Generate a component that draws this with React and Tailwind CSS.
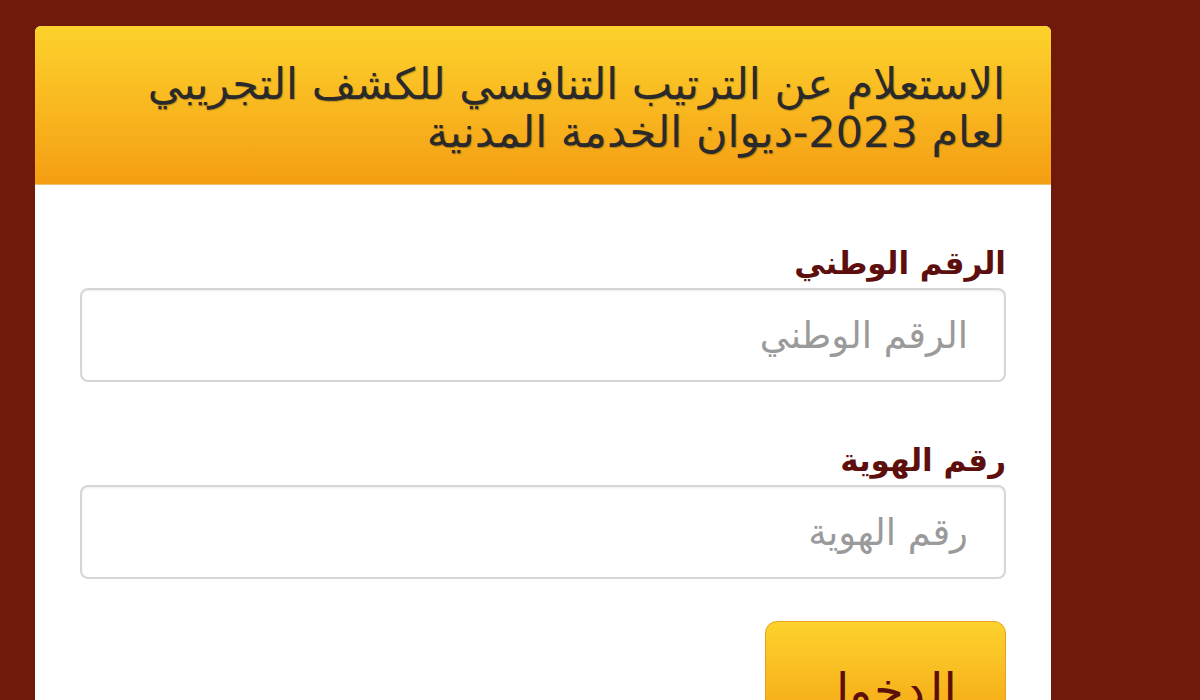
export default function App() {
  return (
    <div
      dir="rtl"
      className="w-[1200px] h-[700px] overflow-hidden bg-[#6f1a0b] pt-[26px]"
      style={{ fontFamily: '"DejaVu Sans", "Liberation Sans", sans-serif' }}
    >
      <div className="mr-[149px] w-[1016px] rounded-t-[6px] bg-white overflow-hidden">
        <div className="h-[159px] bg-gradient-to-b from-[#fcd22c] to-[#f49e12] border-b border-[#f0c070] px-[46px] pt-[34px]">
          <h1 className="text-[43px] leading-[48px] text-[#2a2a2a] [text-shadow:1px_1px_1px_rgba(0,0,0,0.25)]">
            الاستعلام عن الترتيب التنافسي للكشف التجريبي
            <br />
            لعام 2023-ديوان الخدمة المدنية
          </h1>
        </div>
        <div className="px-[45px] pt-[56px] pb-[40px]">
          <label className="block text-[31px] leading-[44px] font-bold text-[#5c0f0c]">
            الرقم الوطني
          </label>
          <input
            placeholder="الرقم الوطني"
            className="mt-[3px] w-full h-[94px] rounded-[8px] border-2 border-[#d6d6d6] px-[36px] text-[37px] text-[#555] placeholder:text-[#9a9a9a] outline-none shadow-[inset_0_1px_2px_rgba(0,0,0,0.08)]"
          />
          <label className="block mt-[56px] text-[31px] leading-[44px] font-bold text-[#5c0f0c]">
            رقم الهوية
          </label>
          <input
            placeholder="رقم الهوية"
            className="mt-[3px] w-full h-[94px] rounded-[8px] border-2 border-[#d6d6d6] px-[36px] text-[37px] text-[#555] placeholder:text-[#9a9a9a] outline-none shadow-[inset_0_1px_2px_rgba(0,0,0,0.08)]"
          />
          <button className="mt-[42px] w-[241px] h-[110px] rounded-[12px] bg-gradient-to-b from-[#fcd22c] to-[#f4a414] border border-[#e8a020] text-[48px] leading-none text-[#5c0f0c] pt-[28px]">
            الدخول
          </button>
        </div>
      </div>
    </div>
  );
}
